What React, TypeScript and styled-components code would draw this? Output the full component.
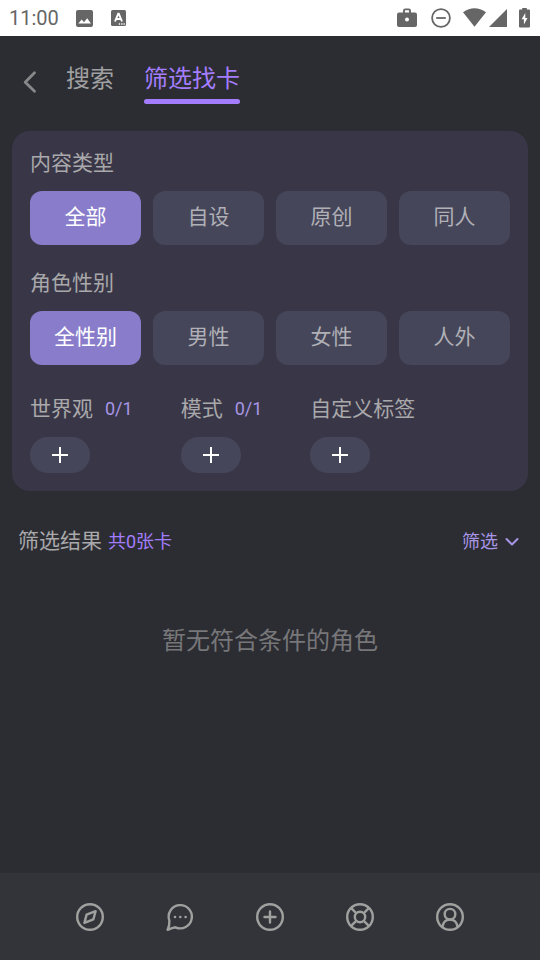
import React, { useState } from "react";
import styled, { createGlobalStyle } from "styled-components";

const GlobalStyle = createGlobalStyle`
  * { box-sizing: border-box; }
  body {
    margin: 0;
    background: #2c2d32;
    font-family: Roboto, "Noto Sans CJK SC", sans-serif;
    color: #a9a8ab;
  }
  button {
    margin: 0;
    padding: 0;
    border: 0;
    background: none;
    color: inherit;
    font: inherit;
    cursor: pointer;
  }
  a { color: inherit; text-decoration: none; }
  h2, p { margin: 0; font-weight: 400; }
  svg { display: block; flex: none; }
`;

const Screen = styled.div`
  display: flex;
  flex-direction: column;
  min-height: 100vh;
`;

const StatusBar = styled.div`
  display: flex;
  align-items: center;
  justify-content: space-between;
  height: 36px;
  padding: 0 10px 0 9px;
  background: #fff;
  color: #666;
`;

const StatusGroup = styled.div<{ $gap: number }>`
  display: flex;
  align-items: center;
  gap: ${(p) => p.$gap}px;
`;

const Clock = styled.time`
  font-size: 20px;
  line-height: 36px;
`;

const Signal = styled.div`
  display: flex;
  align-items: center;
  gap: 3px;
`;

const Header = styled.header`
  display: flex;
  align-items: center;
  padding: 24px 21px 27px;
`;

const BackButton = styled.button`
  display: flex;
  margin-right: 27px;
`;

const Tabs = styled.nav`
  display: flex;
  gap: 30px;
`;

const Tab = styled.a<{ $active?: boolean }>`
  display: flex;
  flex-direction: column;
  gap: 2px;
  padding-top: 1px;
  color: ${(p) => (p.$active ? "#a47dff" : "#a0a0a2")};
  font-size: 24px;
  line-height: 36px;

  &::after {
    content: "";
    height: 5px;
    border-radius: 3px;
    background: ${(p) => (p.$active ? "#a47dff" : "transparent")};
  }
`;

const Card = styled.section`
  display: flex;
  flex-direction: column;
  gap: 22px;
  margin: 0 12px;
  padding: 16px 18px 18px;
  border-radius: 18px;
  background: #393747;
`;

const Field = styled.div`
  display: flex;
  flex-direction: column;
  gap: 11px;
`;

const FieldTitle = styled.h2`
  display: flex;
  align-items: flex-start;
  gap: 12px;
  font-size: 21px;
  line-height: 33px;
`;

const Count = styled.span`
  color: #a795e6;
  font-size: 18px;
  line-height: 31px;
`;

const ChipGrid = styled.div`
  display: grid;
  grid-template-columns: repeat(4, 1fr);
  gap: 12px;
`;

const Chip = styled.button<{ $active: boolean }>`
  height: 54px;
  padding-bottom: 3px;
  border-radius: 12px;
  background: ${(p) => (p.$active ? "#897dcb" : "#454659")};
  color: ${(p) => (p.$active ? "#fff" : "#b0b0b6")};
  font-size: 21px;
  line-height: 30px;
`;

const TagRow = styled.div`
  display: flex;
  gap: 48px;
  padding-top: 6px;
`;

const AddButton = styled.button`
  display: flex;
  align-items: center;
  justify-content: center;
  width: 60px;
  height: 36px;
  border-radius: 18px;
  background: #454659;
  color: #fff;
`;

const ResultBar = styled.div`
  display: flex;
  align-items: center;
  justify-content: space-between;
  padding: 34px 21px 0 18px;
`;

const ResultTitle = styled.h2`
  display: flex;
  align-items: center;
  gap: 6px;
  font-size: 21px;
  line-height: 33px;
`;

const ResultCount = styled.span`
  color: #a47dff;
  font-size: 18px;
`;

const SortButton = styled.button`
  display: flex;
  align-items: center;
  gap: 7px;
  color: #a795e6;
  font-size: 18px;
  line-height: 33px;
`;

const Empty = styled.p`
  flex: 1;
  padding-top: 65px;
  color: #77777a;
  font-size: 24px;
  line-height: 36px;
  text-align: center;
`;

const BottomNav = styled.nav`
  display: flex;
  height: 87px;
  padding: 0 45px;
  background: #333439;
  color: #a0a09f;
`;

const NavItem = styled.a`
  display: flex;
  flex: 1;
  align-items: center;
  justify-content: center;
`;

const NavIcon = ({ children }: { children: React.ReactNode }) => (
  <svg width="30" height="30" viewBox="0 0 30 30" fill="none" stroke="currentColor" strokeWidth="2.4" strokeLinecap="round" strokeLinejoin="round" aria-hidden="true">
    {children}
  </svg>
);

const ring = <circle cx="15" cy="15" r="12.8" />;

const navItems = [
  { label: "发现", icon: <>{ring}<path d="M20.6 9.2 18.4 17.3 9.400 20.900 11.600 12.600Z" /></> },
  {
    label: "消息",
    icon: (
      <>
        <path d="M2.600 27.800Q4.600 24.300 4.400 18.800A11.600 11.600 0 1 1 10.500 25.300Q7.500 25.800 2.600 27.800Z" />
        <path d="M10 15h.01M15.300 15h.01M20.600 15h.01" strokeWidth="2.600" />
      </>
    ),
  },
  { label: "创建", icon: <>{ring}<path d="M15 9.5v11M9.5 15h11" /></> },
  {
    label: "社区",
    icon: (
      <>
        {ring}
        <circle cx="15" cy="15" r="5.2" />
        <path d="m6.2 6.2 5 5M23.8 6.2l-5 5M6.2 23.8l5-5M23.8 23.8l-5-5" />
      </>
    ),
  },
  {
    label: "我的",
    icon: <>{ring}<circle cx="15" cy="12.2" r="5.3" /><path d="M7.6 24.6c.4-4.2 3.4-7.1 7.4-7.1s7 2.9 7.4 7.1" /></>,
  },
];

function ChipField({ title, options }: { title: string; options: string[] }) {
  const [selected, setSelected] = useState(options[0]);
  return (
    <Field role="group" aria-label={title}>
      <FieldTitle>{title}</FieldTitle>
      <ChipGrid>
        {options.map((o) => (
          <Chip key={o} type="button" $active={o === selected} aria-pressed={o === selected} onClick={() => setSelected(o)}>
            {o}
          </Chip>
        ))}
      </ChipGrid>
    </Field>
  );
}

function TagField({ title, count }: { title: string; count?: string }) {
  return (
    <Field>
      <FieldTitle>
        {title}
        {count && <Count>{count}</Count>}
      </FieldTitle>
      <AddButton type="button" aria-label={`添加${title}`}>
        <svg width="18" height="18" viewBox="0 0 18 18" stroke="currentColor" strokeWidth="2" aria-hidden="true">
          <path d="M9 1v16M1 9h16" />
        </svg>
      </AddButton>
    </Field>
  );
}

export default function App() {
  return (
    <Screen>
      <GlobalStyle />
      <StatusBar>
        <StatusGroup $gap={17}>
          <Clock>11:00</Clock>
          <svg width="18" height="18" viewBox="0 0 18 18" aria-hidden="true">
            <rect y="1" width="17" height="17" rx="2" fill="#666" />
            <path d="M2.300 14.500 5.700 10.600l2.300 2.600L11.200 9.200l3.700 5.300Z" fill="#fff" />
          </svg>
          <svg width="15" height="16" viewBox="0 0 15 16" aria-hidden="true">
            <rect width="15" height="16" rx="1.5" fill="#666" />
            <path d="M4 11.500 7.200 3.800h.6l3.200 7.700M5.300 9h4.400" fill="none" stroke="#fff" strokeWidth="1.9" />
            <path d="M7.800 14h1.300M10.200 14h1.300M12.500 14h1.300" stroke="#fff" strokeWidth="1.300" />
          </svg>
        </StatusGroup>
        <StatusGroup $gap={12}>
          <svg width="22" height="20" viewBox="0 0 22 20" aria-hidden="true">
            <path d="M7 6V2.600Q7 1.400 8.200 1.400h3.600q1.200 0 1.200 1.200V6" fill="none" stroke="#666" strokeWidth="1.900" />
            <rect y="4.500" width="20" height="14.500" rx="2" fill="#666" />
            <circle cx="10" cy="11.500" r="2" fill="#fff" />
          </svg>
          <svg width="20" height="20" viewBox="0 0 20 20" fill="none" stroke="#666" strokeWidth="1.8" aria-hidden="true">
            <circle cx="10" cy="10" r="8.9" />
            <path d="M5.2 10h9.6" />
          </svg>
          <Signal>
            <svg width="23" height="20" viewBox="0 0 23 20" aria-hidden="true">
              <path d="M0 4.300Q11.500-3.700 23 4.300L11.500 18.800Z" fill="#666" />
            </svg>
            <svg width="18" height="18" viewBox="0 0 18 18" aria-hidden="true">
              <path d="M18 0v18H0Z" fill="#666" />
            </svg>
          </Signal>
          <svg width="11" height="20" viewBox="0 0 11 20" aria-hidden="true">
            <path d="M3.200 1.500V0h4.600v1.500H10q1 0 1 1V18.500q0 1-1 1H1q-1 0-1-1V2.500q0-1 1-1Z" fill="#666" />
            <path d="M6.300 5 2.600 11.300h2.300V16.500L8.500 9.900H6.300Z" fill="#fff" />
          </svg>
        </StatusGroup>
      </StatusBar>

      <Header>
        <BackButton type="button" aria-label="返回">
          <svg width="18" height="24" viewBox="0 0 18 24" fill="none" stroke="#88888a" strokeWidth="2.8" strokeLinecap="round" strokeLinejoin="round" aria-hidden="true">
            <path d="M13.5 2.8 4.2 12.2l9.3 9" />
          </svg>
        </BackButton>
        <Tabs>
          <Tab href="#search">搜索</Tab>
          <Tab href="#filter" $active aria-current="page">筛选找卡</Tab>
        </Tabs>
      </Header>

      <Card>
        <ChipField title="内容类型" options={["全部", "自设", "原创", "同人"]} />
        <ChipField title="角色性别" options={["全性别", "男性", "女性", "人外"]} />
        <TagRow>
          <TagField title="世界观" count="0/1" />
          <TagField title="模式" count="0/1" />
          <TagField title="自定义标签" />
        </TagRow>
      </Card>

      <ResultBar>
        <ResultTitle>
          筛选结果
          <ResultCount>共0张卡</ResultCount>
        </ResultTitle>
        <SortButton type="button">
          筛选
          <svg width="14" height="10" viewBox="0 0 14 10" fill="none" stroke="currentColor" strokeWidth="2" strokeLinecap="round" strokeLinejoin="round" aria-hidden="true">
            <path d="M1.5 2 7 7.500l5.500-5.500" />
          </svg>
        </SortButton>
      </ResultBar>
      <Empty>暂无符合条件的角色</Empty>

      <BottomNav>
        {navItems.map((n) => (
          <NavItem key={n.label} href="#" aria-label={n.label}>
            <NavIcon>{n.icon}</NavIcon>
          </NavItem>
        ))}
      </BottomNav>
    </Screen>
  );
}
